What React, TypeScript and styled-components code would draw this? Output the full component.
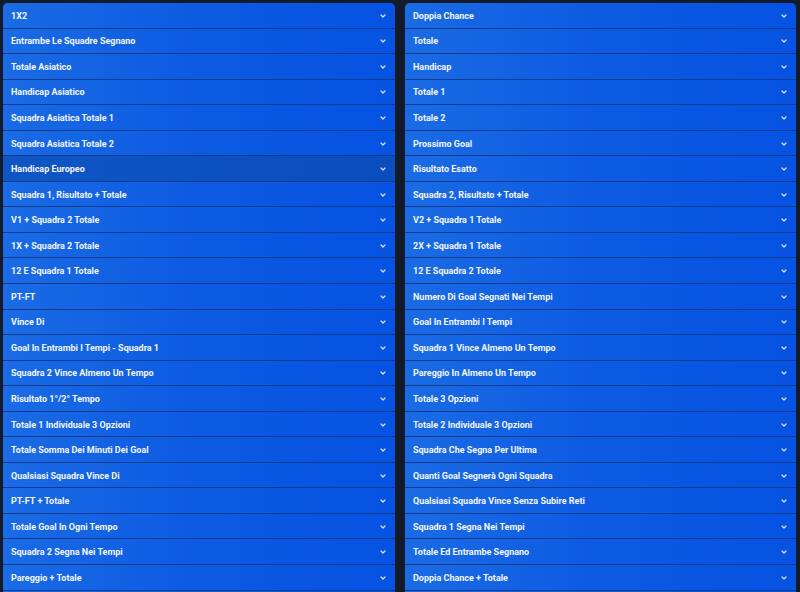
import React from 'react';
import styled, { createGlobalStyle } from 'styled-components';

const leftMarkets = [
    '1X2',
    'Entrambe Le Squadre Segnano',
    'Totale Asiatico',
    'Handicap Asiatico',
    'Squadra Asiatica Totale 1',
    'Squadra Asiatica Totale 2',
    'Handicap Europeo',
    'Squadra 1, Risultato + Totale',
    'V1 + Squadra 2 Totale',
    '1X + Squadra 2 Totale',
    '12 E Squadra 1 Totale',
    'PT-FT',
    'Vince Di',
    'Goal In Entrambi I Tempi - Squadra 1',
    'Squadra 2 Vince Almeno Un Tempo',
    'Risultato 1°/2° Tempo',
    'Totale 1 Individuale 3 Opzioni',
    'Totale Somma Dei Minuti Dei Goal',
    'Qualsiasi Squadra Vince Di',
    'PT-FT + Totale',
    'Totale Goal In Ogni Tempo',
    'Squadra 2 Segna Nei Tempi',
    'Pareggio + Totale',
];

const rightMarkets = [
    'Doppia Chance',
    'Totale',
    'Handicap',
    'Totale 1',
    'Totale 2',
    'Prossimo Goal',
    'Risultato Esatto',
    'Squadra 2, Risultato + Totale',
    'V2 + Squadra 1 Totale',
    '2X + Squadra 1 Totale',
    '12 E Squadra 2 Totale',
    'Numero Di Goal Segnati Nei Tempi',
    'Goal In Entrambi I Tempi',
    'Squadra 1 Vince Almeno Un Tempo',
    'Pareggio In Almeno Un Tempo',
    'Totale 3 Opzioni',
    'Totale 2 Individuale 3 Opzioni',
    'Squadra Che Segna Per Ultima',
    'Quanti Goal Segnerà Ogni Squadra',
    'Qualsiasi Squadra Vince Senza Subire Reti',
    'Squadra 1 Segna Nei Tempi',
    'Totale Ed Entrambe Segnano',
    'Doppia Chance + Totale',
];

const Chevron = () => (
    <svg width="6" height="4" viewBox="0 0 6 4" fill="none">
        <path d="M1 1l2 2 2-2" stroke="#d6e4ff" strokeWidth="1.2" strokeLinecap="round" strokeLinejoin="round" />
    </svg>
);

const App: React.FC = () => {
    return (
        <>
            <GlobalStyle />
            <Page>
                <Column>
                    {leftMarkets.map((m) => (
                        <MarketRow key={m} $active={m === 'Handicap Europeo'}>
                            <span>{m}</span>
                            <Chevron />
                        </MarketRow>
                    ))}
                </Column>
                <Column>
                    {rightMarkets.map((m) => (
                        <MarketRow key={m}>
                            <span>{m}</span>
                            <Chevron />
                        </MarketRow>
                    ))}
                </Column>
            </Page>
        </>
    );
};

const GlobalStyle = createGlobalStyle`
    html, body {
        margin: 0;
        padding: 0;
        background: #131a29;
        overflow: hidden;
    }
`;

const rowGradient = 'linear-gradient(90deg, #1a6be4 0%, #0d5ae2 50%, #0652e2 100%)';

const Page = styled.div`
    display: grid;
    grid-template-columns: 392px 391px;
    column-gap: 10px;
    padding: 3px 4px 0 3px;
    height: 592px;
    box-sizing: border-box;
    overflow: hidden;
    font-family: Roboto, 'Liberation Sans', sans-serif;
`;

const Column = styled.div`
    display: flex;
    flex-direction: column;
    border-radius: 5px 5px 0 0;
    overflow: hidden;
    background: ${rowGradient};
`;

const MarketRow = styled.div<{ $active?: boolean }>`
    display: flex;
    align-items: center;
    justify-content: space-between;
    flex: 0 0 auto;
    height: 25.55px;
    box-sizing: border-box;
    padding: 1px 9px 0 8px;
    border-bottom: 1px solid #0d3b8e;
    background: ${(p) =>
        p.$active ? 'linear-gradient(90deg, #0f56c4 0%, #0a4dbc 100%)' : rowGradient};
    color: #f2f6ff;
    font-size: 9px;
    font-weight: 700;
    cursor: pointer;
    & > span {
        white-space: nowrap;
    }
    & > svg {
        flex: 0 0 auto;
    }
`;

export default App;
